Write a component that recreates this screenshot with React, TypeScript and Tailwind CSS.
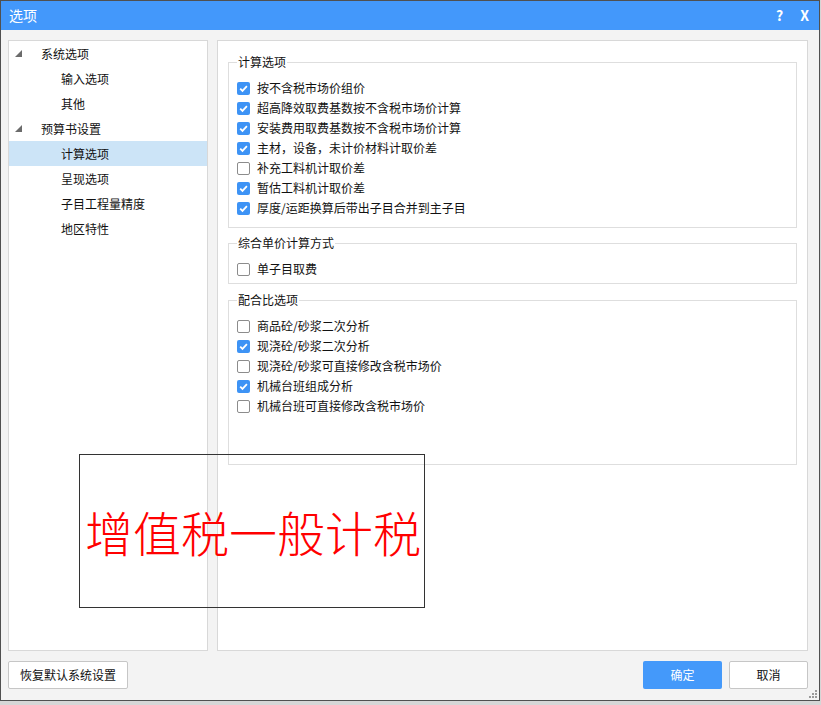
import type React from "react"

const calcOptions: [string, boolean][] = [
  ["按不含税市场价组价", true],
  ["超高降效取费基数按不含税市场价计算", true],
  ["安装费用取费基数按不含税市场价计算", true],
  ["主材，设备，未计价材料计取价差", true],
  ["补充工料机计取价差", false],
  ["暂估工料机计取价差", true],
  ["厚度/运距换算后带出子目合并到主子目", true],
]

const mixOptions: [string, boolean][] = [
  ["商品砼/砂浆二次分析", false],
  ["现浇砼/砂浆二次分析", true],
  ["现浇砼/砂浆可直接修改含税市场价", false],
  ["机械台班组成分析", true],
  ["机械台班可直接修改含税市场价", false],
]

const tree = [
  { label: "系统选项", level: 1 },
  { label: "输入选项", level: 2 },
  { label: "其他", level: 2 },
  { label: "预算书设置", level: 1 },
  { label: "计算选项", level: 2, selected: true },
  { label: "呈现选项", level: 2 },
  { label: "子目工程量精度", level: 2 },
  { label: "地区特性", level: 2 },
]

function Check({ checked }: { checked: boolean }) {
  if (checked) {
    return (
      <span className="flex h-[13px] w-[13px] shrink-0 items-center justify-center rounded-[2px] bg-[#3d93f5]">
        <svg width="11" height="11" viewBox="0 0 11 11">
          <path d="M2.2 5.6 L4.5 7.9 L8.9 3.2" fill="none" stroke="#fff" strokeWidth="1.8" />
        </svg>
      </span>
    )
  }
  return <span className="h-[13px] w-[13px] shrink-0 rounded-[2px] border border-[#8c8c8c] bg-white" />
}

function Row({ label, checked }: { label: string; checked: boolean }) {
  return (
    <div className="flex h-[20px] items-center gap-[7px]">
      <Check checked={checked} />
      <span>{label}</span>
    </div>
  )
}

function Group({ title, className, children }: { title: string; className?: string; children: React.ReactNode }) {
  return (
    <fieldset className={`border border-[#dedede] px-[8px] pt-[8px] ${className ?? ""}`}>
      <legend className="px-[1px] text-[12px] leading-[16px]">{title}</legend>
      {children}
    </fieldset>
  )
}

export default function App() {
  return (
    <div className="relative h-[705px] w-[821px] bg-[#d6d6d6] font-['Noto_Sans_CJK_SC',sans-serif] text-[12px] text-[#111]">
      <div className="flex h-[701px] w-[820px] flex-col border border-[#505050] bg-[#f3f3f3]">
        {/* title bar */}
        <div className="flex h-[29px] shrink-0 items-center bg-[#4398fb] pl-[8px] pr-[10px] text-white">
          <span className="text-[14px]">选项</span>
          <span className="ml-auto text-[14px] font-bold">?</span>
          <span className="ml-[17px] text-[14px] font-bold">X</span>
        </div>

        {/* body */}
        <div className="box-content flex h-[611px] shrink-0 gap-[9px] pl-[7px] pr-[11px] pt-[10px]">
          <div className="w-[200px] border border-[#d8d8d8] bg-white">
            {tree.map((t) => (
              <div
                key={t.label}
                className={`flex h-[25px] items-center ${t.selected ? "bg-[#cce4f7]" : ""}`}
              >
                <span className="flex w-[32px] pl-[6px]">
                  {t.level === 1 && (
                    <svg width="7" height="7" viewBox="0 0 7 7">
                      <polygon points="7,0 7,7 0,7" fill="#6b6b6b" />
                    </svg>
                  )}
                </span>
                <span className={t.level === 2 ? "pl-[20px]" : ""}>{t.label}</span>
              </div>
            ))}
          </div>

          <div className="flex flex-1 flex-col border border-[#d8d8d8] bg-white px-[10px] pt-[13px]">
            <Group title="计算选项" className="pb-[9px]">
              {calcOptions.map(([l, c]) => (
                <Row key={l} label={l} checked={c} />
              ))}
            </Group>
            <Group title="综合单价计算方式" className="mt-[7px] pb-[4px]">
              <Row label="单子目取费" checked={false} />
            </Group>
            <Group title="配合比选项" className="mt-[8px] pb-[48px]">
              {mixOptions.map(([l, c]) => (
                <Row key={l} label={l} checked={c} />
              ))}
            </Group>
          </div>
        </div>

        {/* footer */}
        <div className="flex items-start pl-[7px] pr-[11px] pt-[10px]">
          <button className="h-[28px] w-[120px] rounded-[2px] border border-[#c6c6c6] bg-white text-[12px]">
            恢复默认系统设置
          </button>
          <button className="ml-auto h-[28px] w-[79px] rounded-[2px] bg-[#4499fa] text-[12px] text-white">
            确定
          </button>
          <button className="ml-[7px] h-[28px] w-[79px] rounded-[2px] border border-[#c6c6c6] bg-white text-[12px]">
            取消
          </button>
        </div>
        <div className="mt-auto flex justify-end pb-[2px] pr-[2px]">
          <svg width="8" height="8" viewBox="0 0 8 8">
            <rect x="6" y="0" width="2" height="2" fill="#9a9a9a" />
            <rect x="3" y="3" width="2" height="2" fill="#9a9a9a" />
            <rect x="6" y="3" width="2" height="2" fill="#9a9a9a" />
            <rect x="0" y="6" width="2" height="2" fill="#9a9a9a" />
            <rect x="3" y="6" width="2" height="2" fill="#9a9a9a" />
            <rect x="6" y="6" width="2" height="2" fill="#9a9a9a" />
          </svg>
        </div>
      </div>

      {/* overlay stamp */}
      <div className="absolute left-[79px] top-[454px] flex h-[154px] w-[346px] items-center border border-[#333] pl-[5px]">
        <span className="font-['Noto_Sans_CJK_SC',serif] text-[48px] font-light leading-none text-[#ff0000]">
          增值税一般计税
        </span>
      </div>
    </div>
  )
}
